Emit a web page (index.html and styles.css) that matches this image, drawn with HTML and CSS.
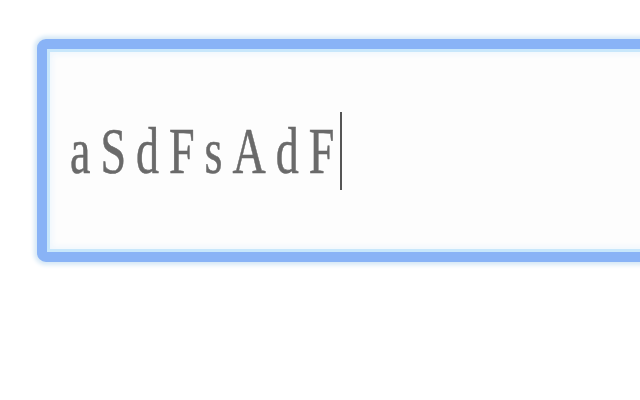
FILE: index.html
```html
<!DOCTYPE html>
<html lang="en">
<head>
<meta charset="utf-8">
<title>Input</title>
<link rel="stylesheet" href="styles.css">
</head>
<body>
<div class="page">
  <div class="field">
    <span class="value">aSdFsAdF</span><span class="caret"></span>
  </div>
</div>
</body>
</html>
```

FILE: styles.css
```css
html, body {
  margin: 0;
  padding: 0;
  background: #ffffff;
}
.page {
  width: 640px;
  height: 400px;
  overflow: hidden;
  padding: 39px 0 0 37px;
  box-sizing: border-box;
}
.field {
  width: 700px;
  height: 223px;
  box-sizing: border-box;
  border: 10px solid #89b3f6;
  border-radius: 9px;
  background: #fdfdfd;
  box-shadow: 0 0 4px 3px #d6e8f6, inset 0 0 0 3px #c8e7fb, inset 0 0 6px 5px #eef6fd;
  display: flex;
  align-items: center;
  padding-left: 23px;
}
.value {
  display: inline-block;
  font-family: "Liberation Serif", "Times New Roman", serif;
  font-size: 46px;
  line-height: 46px;
  letter-spacing: 10px;
  color: #6a6a6a;
  -webkit-text-stroke: 0.4px #6a6a6a;
  transform: scaleY(1.44);
}
.caret {
  display: inline-block;
  width: 2px;
  height: 78px;
  margin-left: -4px;
  background: #555555;
}
```
